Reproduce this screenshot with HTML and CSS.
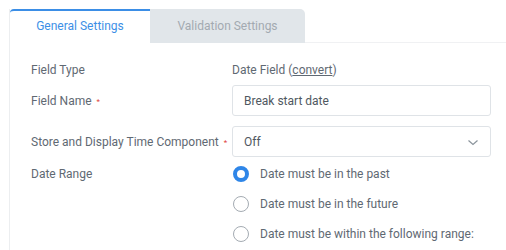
FILE: index.html
```html
<!DOCTYPE html>
<html>
<head>
<meta charset="utf-8">
<link rel="stylesheet" href="styles.css">
</head>
<body>
<div class="panel">
  <div class="tabs">
    <div class="tab active">General Settings</div>
    <div class="tab inactive">Validation Settings</div>
    <div class="tab-rest"></div>
  </div>
  <div class="form">
    <div class="row r1">
      <div class="label">Field Type</div>
      <div class="value">Date Field (<span class="link">convert</span>)</div>
    </div>
    <div class="row r2">
      <div class="label">Field Name <span class="req">*</span></div>
      <div class="input">Break start date</div>
    </div>
    <div class="row r3">
      <div class="label">Store and Display Time Component <span class="req">*</span></div>
      <div class="input select">Off
        <svg class="chev" width="12" height="8" viewBox="0 0 12 8"><path d="M1.5 1.5 L6 5.5 L10.5 1.5" fill="none" stroke="#8b949c" stroke-width="1.2"/></svg>
      </div>
    </div>
    <div class="row r4">
      <div class="label top">Date Range</div>
      <div class="radios">
        <div class="radio"><span class="dot checked"></span>Date must be in the past</div>
        <div class="radio"><span class="dot"></span>Date must be in the future</div>
        <div class="radio"><span class="dot"></span>Date must be within the following range:</div>
      </div>
    </div>
  </div>
</div>
</body>
</html>
```

FILE: styles.css
```css
html, body {
  margin: 0;
  padding: 0;
  background: #ffffff;
}
body {
  font-family: Roboto, "Liberation Sans", sans-serif;
  font-size: 12px;
  color: #5f6973;
  padding: 9px 0 0 9px;
  white-space: nowrap;
}
.panel {
  border-left: 1px solid #eceef0;
  height: 250px;
}
.tabs {
  display: flex;
  height: 34px;
}
.tab {
  display: flex;
  align-items: center;
  justify-content: center;
  box-sizing: border-box;
  height: 34px;
  font-size: 12px;
}
.tab.active {
  width: 140px;
  border-top: 2px solid #3b8ee6;
  border-top-left-radius: 4px;
  color: #3d8fe6;
  background: #ffffff;
  padding-bottom: 2px;
}
.tab.inactive {
  width: 155px;
  background: #e1e6ea;
  color: #a3aab1;
  border-top-right-radius: 5px;
}
.tab-rest {
  flex: 1;
  border-bottom: 1px solid #f0f1f3;
}
.form {
  padding: 17px 0 0 21px;
}
.row {
  display: flex;
}
.r1 { height: 20px; }
.r2 { height: 31px; margin-top: 5px; }
.r3 { height: 31px; margin-top: 10px; }
.r4 { margin-top: 2px; }
.label {
  width: 201px;
  flex: none;
  display: flex;
  align-items: center;
}
.label.top {
  align-items: flex-start;
  line-height: 30px;
}
.value {
  display: flex;
  align-items: center;
}
.link {
  text-decoration: underline;
}
.req {
  color: #e0413c;
  font-size: 8px;
  margin-left: 5px;
  margin-top: 2px;
}
.input {
  width: 259px;
  box-sizing: border-box;
  border: 1px solid #dfe3e7;
  border-radius: 3px;
  display: flex;
  align-items: center;
  padding-left: 11px;
  color: #4f5861;
  position: relative;
}
.select .chev {
  position: absolute;
  right: 11px;
  top: 12px;
}
.radios {
  display: flex;
  flex-direction: column;
}
.radio {
  height: 30px;
  display: flex;
  align-items: center;
}
.dot {
  box-sizing: border-box;
  width: 16px;
  height: 16px;
  border-radius: 50%;
  border: 1.5px solid #a4abb2;
  margin-right: 11px;
  margin-left: 1px;
  background: #fff;
}
.dot.checked {
  border: 4.5px solid #2f86e8;
}
```
